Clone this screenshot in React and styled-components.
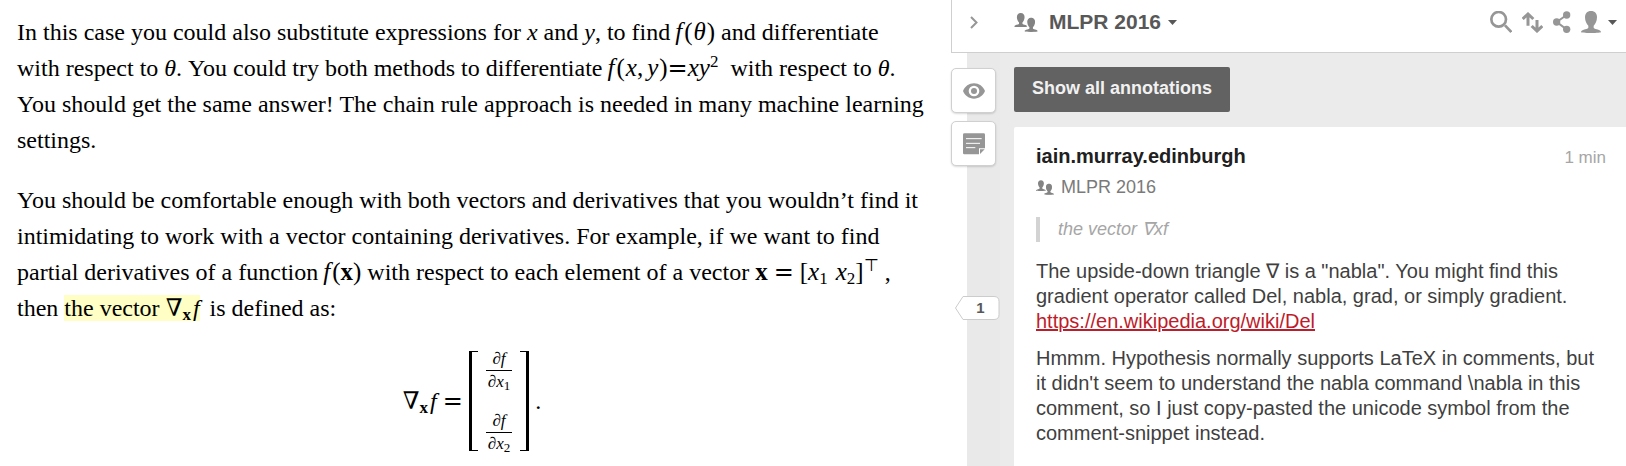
import React, { useState } from 'react';

import styled, { createGlobalStyle } from 'styled-components';

const GlobalStyle = createGlobalStyle`
  * {
    box-sizing: border-box;
  }
  body {
    margin: 0;
    background-color: white;
  }
`;

const Page = styled.div`
  display: flex;
  height: 100vh;
  overflow: hidden;
`;

/* ---- article ---- */

const Article = styled.main`
  flex: 1;
  min-width: 0;
  padding: 14px 24px 0 17px;
  font-family: 'Liberation Serif', 'Times New Roman', serif;
  font-size: 24px;
  line-height: 36px;
  color: black;
`;

const Paragraph = styled.p`
  margin: 0 0 24px;
`;

const MathText = styled.span`
  font-size: 25px;
  line-height: 0;
  white-space: nowrap;
  margin-right: ${(props) => props.$after || 0}px;
`;

const Var = styled.i`
  margin-left: ${(props) => props.$before || 0}px;
  margin-right: ${(props) => props.$after || 0}px;
`;

const Operator = styled.span`
  font-family: 'DejaVu Serif', serif;
  font-size: 24px;
  line-height: 0;
  margin: 0 ${(props) => props.$space || 0}px;
`;

const Nabla = styled.span`
  font-family: 'Liberation Serif', 'DejaVu Serif', serif;
`;

const Sub = styled.sub`
  font-size: 17px;
  line-height: 0;
  vertical-align: -4px;
`;

const Sup = styled.sup`
  font-size: 17px;
  line-height: 0;
  vertical-align: 9px;
`;

const Highlight = styled.mark`
  margin-right: 4px;
  color: inherit;
  background-color: #ffffc5;
`;

const Equation = styled.div`
  display: flex;
  justify-content: center;
  align-items: center;
  gap: 6px;
  margin-top: 25px;
`;

const Matrix = styled.div`
  position: relative;
  display: flex;
  flex-direction: column;
  justify-content: space-between;
  height: 100px;
  padding: 0 14px;
  border: solid black;
  border-width: 0 3px;

  &::before,
  &::after {
    content: '';
    position: absolute;
    top: 0;
    bottom: 0;
    width: 6px;
    border: solid black;
    border-width: 1px 0;
  }
  &::before {
    left: 0;
  }
  &::after {
    right: 0;
  }
`;

const Fraction = styled.div`
  display: grid;
  font-size: 17px;
  line-height: 15px;
  font-style: italic;
  text-align: center;
`;

const Numerator = styled.span`
  padding-bottom: 4px;
  border-bottom: 1px solid black;
`;

const Denominator = styled.span`
  padding: 3px 2px 0;

  sub {
    font-size: 13px;
    font-style: normal;
    line-height: 0;
    vertical-align: -3px;
  }
`;

/* ---- sidebar ---- */

const Sidebar = styled.aside`
  display: flex;
  flex-direction: column;
  flex: none;
  width: 675px;
  font-family: 'Liberation Sans', Arial, sans-serif;
  color: #3f3f3f;
`;

const TopBar = styled.header`
  display: flex;
  align-items: center;
  height: 53px;
  padding: 0 9px 8px 18px;
  background-color: white;
  border: solid #cfcfcf;
  border-width: 0 0 1px 1px;
`;

const IconButton = styled.button`
  display: flex;
  align-items: center;
  gap: 7px;
  padding: 0;
  border: 0;
  background: none;
  color: #969696;
  cursor: pointer;
`;

const GroupButton = styled(IconButton)`
  gap: 11px;
  margin: 0 auto 0 36px;
  font: bold 21px 'Liberation Sans', Arial, sans-serif;
  color: #585858;
`;

const GroupName = styled.span`
  display: flex;
  align-items: center;
  gap: 7px;
`;

const Tools = styled.div`
  display: flex;
  align-items: center;
  gap: 10px;
`;

const Body = styled.div`
  display: flex;
  flex: 1;
`;

const Rail = styled.div`
  flex: none;
  width: 63px;
  padding-top: 15px;
  background: linear-gradient(to right, white 16px, #e9e9e9 16px, #e9e9e9 49px, #ebebeb 49px);
`;

const RailButton = styled.button`
  display: flex;
  align-items: center;
  justify-content: center;
  width: 45px;
  height: 45px;
  margin-bottom: 8px;
  padding: 0;
  border: 1px solid #d0d0d0;
  border-radius: 5px;
  background-color: white;
  box-shadow: 0 1px 2px rgba(0, 0, 0, 0.15);
  color: #969696;
  cursor: pointer;
`;

const Bucket = styled.button`
  position: relative;
  display: block;
  width: 45px;
  height: 24px;
  margin: 130px 0 0 4px;
  padding: 0 0 0 6px;
  border: 0;
  background: none;
  font: bold 15px/24px 'Liberation Sans', Arial, sans-serif;
  color: #585858;
  cursor: pointer;
`;

const BucketShape = styled.svg`
  position: absolute;
  top: 0;
  left: 0;
`;

const BucketCount = styled.span`
  position: relative;
`;

const Stream = styled.div`
  display: flex;
  flex-direction: column;
  flex: 1;
  align-items: flex-start;
  padding-top: 14px;
  background-color: #ebebeb;
`;

const ShowAll = styled.button`
  height: 45px;
  padding: 0 18px 2px;
  border: 0;
  border-radius: 2px;
  background-color: #626262;
  font: bold 18px 'Liberation Sans', Arial, sans-serif;
  color: #f1f1f1;
  cursor: pointer;
`;

const Card = styled.article`
  flex: 1;
  align-self: stretch;
  margin-top: 15px;
  padding: 17px 20px 0 22px;
  border-radius: 2px 0 0 0;
  background-color: white;
`;

const CardHeader = styled.div`
  display: flex;
  justify-content: space-between;
  align-items: baseline;
  line-height: 25px;
`;

const Author = styled.a`
  font-size: 20px;
  font-weight: bold;
  color: #202020;
  text-decoration: none;
`;

const Time = styled.time`
  font-size: 17px;
  color: #a6a6a6;
`;

const Group = styled.div`
  display: flex;
  align-items: center;
  gap: 7px;
  margin-top: 5px;
  font-size: 18px;
  line-height: 25px;
  color: #7a7a7a;
`;

const Quote = styled.blockquote`
  margin: 17px 0;
  padding-left: 18px;
  border-left: 4px solid #d3d3d3;
  font-size: 18px;
  font-style: italic;
  line-height: 25px;
  color: #a6a6a6;
`;

const Comment = styled.p`
  margin: 0 0 12px;
  font-size: 20px;
  line-height: 25px;
`;

const Link = styled.a`
  color: #bd1c2b;
`;

/* ---- icons ---- */

const PERSON =
  'M30 0C42 0 48 8 48 19c0 12-5 20-10 25v6c2 3 8 4 14 6 5 2 8 4 8 7 0 2-12 3-30 3S0 65 0 63c0-3 3-5 8-7 6-2 12-3 14-6v-6C17 39 12 31 12 19 12 8 18 0 30 0z';

const GroupIcon = ({ width, height }) => (
  <svg width={width} height={height} viewBox="0 0 70 57" fill="#838383" aria-hidden="true">
    <path d={PERSON} transform="scale(.64)" />
    <path d={PERSON} transform="translate(31 14) scale(.65)" stroke="white" strokeWidth="5" />
    <path d={PERSON} transform="translate(31 14) scale(.65)" />
  </svg>
);

const UserIcon = () => (
  <svg width="20" height="22" viewBox="0 0 60 66" fill="currentColor" aria-hidden="true">
    <path d={PERSON} />
  </svg>
);

const CaretIcon = () => (
  <svg width="9" height="5" viewBox="0 0 9 5" fill="#585858" aria-hidden="true">
    <path d="M0 0h9L4.500 5z" />
  </svg>
);

const ChevronIcon = () => (
  <svg width="8" height="13" viewBox="0 0 8 13" fill="none" stroke="currentColor" strokeWidth="2" aria-hidden="true">
    <path d="M1 1l5.500 5.500L1 12" />
  </svg>
);

const SearchIcon = () => (
  <svg width="22" height="22" viewBox="0 0 66 66" fill="none" stroke="currentColor" aria-hidden="true">
    <circle cx="26" cy="25" r="22" strokeWidth="8" />
    <path d="M45 43l19 20" strokeWidth="8" />
  </svg>
);

const SortIcon = () => (
  <svg width="21" height="21" viewBox="0 0 63 63" fill="none" stroke="currentColor" strokeWidth="9" aria-hidden="true">
    <path d="M18 6v35M2 21L18 6l16 15" />
    <path d="M45 24v33M29 42l16 15 16-15" />
  </svg>
);

const ShareIcon = () => (
  <svg width="18" height="22" viewBox="0 0 54 66" fill="currentColor" stroke="currentColor" aria-hidden="true">
    <path d="M41 12L11 33l30 22" fill="none" strokeWidth="6" />
    <circle cx="41" cy="12" r="11" stroke="none" />
    <circle cx="11" cy="33" r="11" stroke="none" />
    <circle cx="41" cy="55" r="11" stroke="none" />
  </svg>
);

const EyeIcon = () => (
  <svg width="22" height="16" viewBox="0 0 66 48" fill="currentColor" aria-hidden="true">
    <path
      fillRule="evenodd"
      d="M33 1c15 0 27 9 33 23-6 14-18 23-33 23S6 38 0 24C6 10 18 1 33 1zm0 7a16 16 0 100 32 16 16 0 000-32z"
    />
    <circle cx="33" cy="24" r="9" />
  </svg>
);

const NoteIcon = () => (
  <svg width="22" height="22" viewBox="0 0 66 66" aria-hidden="true">
    <path d="M4 1h58q4 0 4 4v41H48v18H4q-4 0-4-4V5q0-4 4-4z" fill="currentColor" />
    <path d="M51 49h14L51 63z" fill="currentColor" />
    <path d="M9 17h47M9 31h42M9 44h28" stroke="white" strokeWidth="3" />
  </svg>
);

const GradF = () => (
  <>
    <Nabla>∇</Nabla>
    <Sub as="sub">
      <b>x</b>
    </Sub>
    <Var $before={2}>f</Var>
  </>
);

const Partial = ({ index }) => (
  <Fraction>
    <Numerator>∂f</Numerator>
    <Denominator>
      ∂x<sub>{index}</sub>
    </Denominator>
  </Fraction>
);

const App = () => {
  const [visible, setVisible] = useState(true);
  return (
    <>
      <GlobalStyle />
      <Page>
        <Article>
          <Paragraph>
            In this case you could also substitute expressions for <Var>x</Var> and <Var>y</Var>, to find{' '}
            <MathText>
              <Var $before={-1} $after={2}>
                f
              </Var>
              (
              <Var $before={1} $after={1}>
                θ
              </Var>
              )
            </MathText>{' '}
            and differentiate with respect to <Var>θ</Var>. You could try both methods to differentiate{' '}
            <MathText $after={6}>
              <Var $before={-1} $after={2}>
                f
              </Var>
              (
              <Var $before={1}>x</Var>,
              <Var $before={4} $after={1}>
                y
              </Var>
              )<Operator>=</Operator>
              <Var>x</Var>
              <Var>y</Var>
              <Sup>2</Sup>
            </MathText>{' '}
            with respect to <Var>θ</Var>. You should get the same answer! The chain rule approach is needed in many
            machine learning settings.
          </Paragraph>
          <Paragraph>
            You should be comfortable enough with both vectors and derivatives that you wouldn’t find it intimidating
            to work with a vector containing derivatives. For example, if we want to find partial derivatives of a
            function{' '}
            <MathText>
              <Var $before={-1} $after={2}>
                f
              </Var>
              (<b>x</b>)
            </MathText>{' '}
            with respect to each element of a vector{' '}
            <MathText>
              <b>x</b>
              <Operator $space={6}>=</Operator>[<Var>x</Var>
              <Sub>1</Sub>
              <Var $before={8}>x</Var>
              <Sub>2</Sub>]<Sup>⊤</Sup>
            </MathText>{' '}
            , then{' '}
            <Highlight>
              the vector <GradF />
            </Highlight>{' '}
            is defined as:
          </Paragraph>
          <Equation>
            <span>
              <GradF />
            </span>
            <Operator>=</Operator>
            <Matrix>
              <Partial index={1} />
              <Partial index={2} />
            </Matrix>
            <span>.</span>
          </Equation>
        </Article>

        <Sidebar>
          <TopBar>
            <IconButton aria-label="Collapse sidebar">
              <ChevronIcon />
            </IconButton>
            <GroupButton>
              <GroupIcon width={24} height={19} />
              <GroupName>
                MLPR 2016
                <CaretIcon />
              </GroupName>
            </GroupButton>
            <Tools>
              <IconButton aria-label="Search">
                <SearchIcon />
              </IconButton>
              <IconButton aria-label="Sort">
                <SortIcon />
              </IconButton>
              <IconButton aria-label="Share">
                <ShareIcon />
              </IconButton>
              <IconButton aria-label="Account">
                <UserIcon />
                <CaretIcon />
              </IconButton>
            </Tools>
          </TopBar>
          <Body>
            <Rail>
              <RailButton aria-label="Toggle highlights" aria-pressed={visible} onClick={() => setVisible(!visible)}>
                <EyeIcon />
              </RailButton>
              <RailButton aria-label="New page note">
                <NoteIcon />
              </RailButton>
              <Bucket>
                <BucketShape width="45" height="24" fill="white" stroke="#cccccc" aria-hidden="true">
                  <path d="M8 .5h31q5 0 5 5v13q0 5-5 5H8L.5 12z" />
                </BucketShape>
                <BucketCount>1</BucketCount>
              </Bucket>
            </Rail>
            <Stream>
              <ShowAll>Show all annotations</ShowAll>
              <Card>
                <CardHeader>
                  <Author href="#author">iain.murray.edinburgh</Author>
                  <Time>1 min</Time>
                </CardHeader>
                <Group>
                  <GroupIcon width={18} height={15} />
                  MLPR 2016
                </Group>
                <Quote>the vector ∇xf</Quote>
                <Comment>
                  The upside-down triangle ∇ is a "nabla". You might find this gradient operator called Del, nabla,
                  grad, or simply gradient. <Link href="#del">https://en.wikipedia.org/wiki/Del</Link>
                </Comment>
                <Comment>
                  Hmmm. Hypothesis normally supports LaTeX in comments, but it didn't seem to understand the nabla
                  command \nabla in this comment, so I just copy-pasted the unicode symbol from the comment-snippet
                  instead.
                </Comment>
              </Card>
            </Stream>
          </Body>
        </Sidebar>
      </Page>
    </>
  );
};

export default App;
